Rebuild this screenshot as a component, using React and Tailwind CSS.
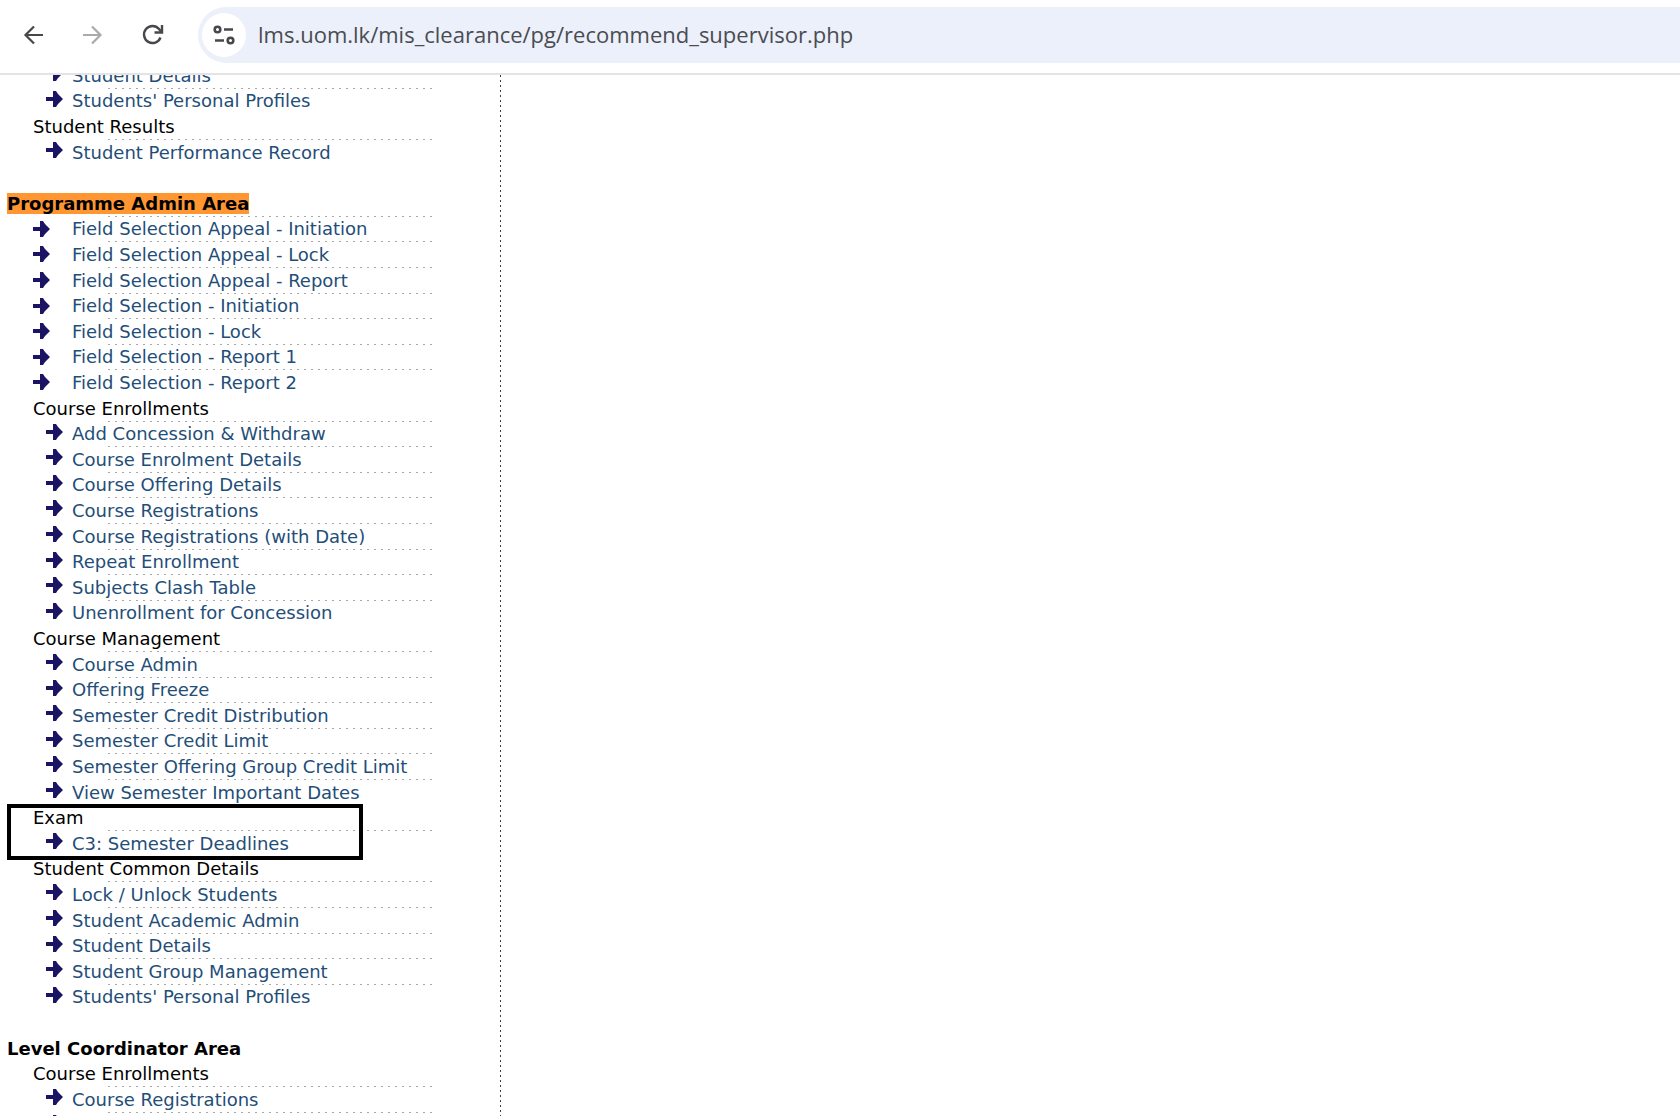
import React from "react";

const rows = [
  ["sub", "Student Details"],
  ["sub", "Students' Personal Profiles"],
  ["group", "Student Results"],
  ["sub", "Student Performance Record"],
  ["gap", ""],
  ["area", "Programme Admin Area", "marked"],
  ["item", "Field Selection Appeal - Initiation"],
  ["item", "Field Selection Appeal - Lock"],
  ["item", "Field Selection Appeal - Report"],
  ["item", "Field Selection - Initiation"],
  ["item", "Field Selection - Lock"],
  ["item", "Field Selection - Report 1"],
  ["item", "Field Selection - Report 2"],
  ["group", "Course Enrollments"],
  ["sub", "Add Concession & Withdraw"],
  ["sub", "Course Enrolment Details"],
  ["sub", "Course Offering Details"],
  ["sub", "Course Registrations"],
  ["sub", "Course Registrations (with Date)"],
  ["sub", "Repeat Enrollment"],
  ["sub", "Subjects Clash Table"],
  ["sub", "Unenrollment for Concession"],
  ["group", "Course Management"],
  ["sub", "Course Admin"],
  ["sub", "Offering Freeze"],
  ["sub", "Semester Credit Distribution"],
  ["sub", "Semester Credit Limit"],
  ["sub", "Semester Offering Group Credit Limit"],
  ["sub", "View Semester Important Dates"],
  ["group", "Exam", "boxed"],
  ["sub", "C3: Semester Deadlines"],
  ["group", "Student Common Details"],
  ["sub", "Lock / Unlock Students"],
  ["sub", "Student Academic Admin"],
  ["sub", "Student Details"],
  ["sub", "Student Group Management"],
  ["sub", "Students' Personal Profiles"],
  ["gap", ""],
  ["area", "Level Coordinator Area"],
  ["group", "Course Enrollments"],
  ["sub", "Course Registrations"],
  ["sub", ""],
];

const Arrow = () => (
  <svg width="17" height="16" viewBox="0 0 17 16" fill="#1b1464">
    <path d="M0 6h7V0h3l2 3 5 5-5 5-2 3H7v-6H0z" />
  </svg>
);

const Row = ({ kind, label, flag }) => {
  const isLink = kind === "sub" || kind === "item";
  return (
    <li className="relative flex h-[26px] items-center whitespace-nowrap nth-[5n]:h-[25px] nth-[5n+2]:h-[25px]">
      {isLink && (
        <>
          <span className="absolute top-0 right-0 left-[108px] h-px bg-[repeating-linear-gradient(90deg,#a8a8a8_0_2px,transparent_2px_7px)]" />
          <a href="#" className="flex items-center text-[#1f4e79]">
            <span className={kind === "sub" ? "w-[72px] pl-[46px] pb-1" : "w-[72px] pl-[33px]"}>
              <Arrow />
            </span>
            {label}
          </a>
        </>
      )}
      {kind === "group" && <span className="pl-[33px]">{label}</span>}
      {kind === "area" && (
        <h2 className={flag ? "ml-[7px] bg-[#ff9632] leading-[21px] font-bold" : "ml-[7px] leading-[21px] font-bold"}>
          {label}
        </h2>
      )}
      {flag === "boxed" && (
        <span className="pointer-events-none absolute -top-px left-[7px] z-10 h-14 w-[356px] border-4 border-black" />
      )}
    </li>
  );
};

const App = () => {
  return (
    <div className="flex h-screen flex-col overflow-hidden bg-white text-black">
      {/* Browser toolbar */}
      <header className="flex h-[75px] shrink-0 items-start border-b-2 border-[#e4e4e6] pt-[7px]">
        <div className="flex h-14 w-[198px] shrink-0 items-center gap-9 pl-[22px]">
          <button aria-label="Back">
            <svg width="24" height="24" viewBox="0 0 24 24" fill="none" stroke="#47484b" strokeWidth="2.2">
              <path d="M21 12H4M12 3.5L3.5 12l8.5 8.5" />
            </svg>
          </button>
          <button aria-label="Forward">
            <svg width="24" height="24" viewBox="0 0 24 24" fill="none" stroke="#a9aaac" strokeWidth="2.2">
              <path d="M1 12h17M10 3.5l8.500 8.500-8.500 8.500" />
            </svg>
          </button>
          <button aria-label="Reload">
            <svg width="24" height="24" viewBox="0 0 24 24" fill="none" stroke="#47484b" strokeWidth="2.4">
              <path d="M18.500 14.500A8.500 8.500 0 1 1 17 6l2 2.500" />
              <path d="M20 2v7.500h-7.500" />
            </svg>
          </button>
        </div>
        <div className="flex h-14 flex-1 items-center rounded-l-full bg-[#ecf0fa] pl-1">
          <span className="flex size-11 shrink-0 items-center justify-center rounded-full bg-white">
            <svg width="22" height="20" viewBox="0 0 22 20" fill="none" stroke="#47484b" strokeWidth="2.6">
              <circle cx="4.500" cy="4.500" r="2.800" />
              <path d="M11 4.500h9M2 15.500h9" />
              <circle cx="17.500" cy="15.500" r="2.800" />
            </svg>
          </span>
          <input
            aria-label="Address"
            className="ml-3 flex-1 bg-transparent pb-px font-['Open_Sans',sans-serif] text-[22px] text-[#4a4c52] outline-none"
            defaultValue="lms.uom.lk/mis_clearance/pg/recommend_supervisor.php"
          />
        </div>
      </header>

      {/* Side menu */}
      <main className="flex min-h-0 flex-1">
        <nav className="w-[500px] shrink-0 overflow-hidden font-['DejaVu_Sans',sans-serif] text-[18px]">
          <ul className="-mt-[13px] w-[432px]">
            {rows.map(([kind, label, flag], i) => (
              <Row key={i} kind={kind} label={label} flag={flag} />
            ))}
          </ul>
        </nav>
        <div className="w-px bg-[repeating-linear-gradient(180deg,#3c3c50_0_2px,transparent_2px_5px)]" />
      </main>
    </div>
  );
};

export default App;
